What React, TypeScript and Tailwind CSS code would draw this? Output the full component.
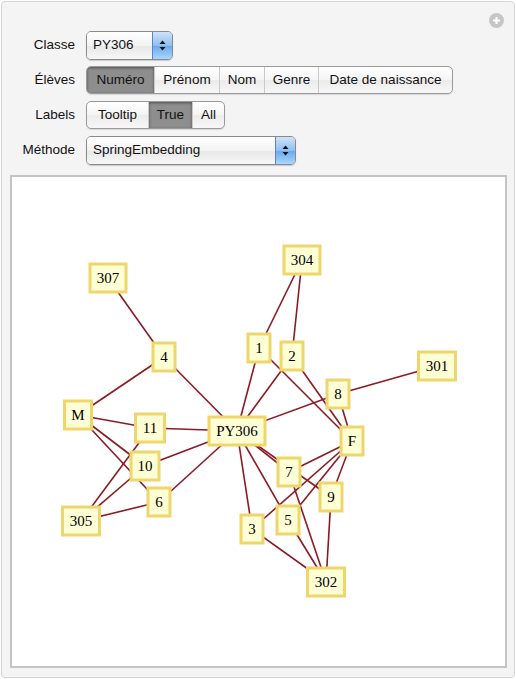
import React from "react";

type Node = { id: string; x: number; y: number; w: number };

// centres in page coordinates; the svg viewBox is offset to match
const nodes: Node[] = [
  { id: "307", x: 108, y: 278, w: 39 },
  { id: "304", x: 302, y: 260, w: 39 },
  { id: "4", x: 164, y: 357, w: 25 },
  { id: "1", x: 259, y: 348, w: 25 },
  { id: "2", x: 292, y: 356, w: 25 },
  { id: "301", x: 437, y: 366, w: 40 },
  { id: "8", x: 338, y: 394, w: 25 },
  { id: "M", x: 78, y: 415, w: 30 },
  { id: "11", x: 150, y: 428, w: 32 },
  { id: "PY306", x: 237, y: 431, w: 59 },
  { id: "10", x: 145, y: 466, w: 31 },
  { id: "6", x: 159, y: 502, w: 25 },
  { id: "305", x: 81, y: 521, w: 40 },
  { id: "3", x: 252, y: 529, w: 25 },
  { id: "F", x: 352, y: 441, w: 25 },
  { id: "7", x: 289, y: 472, w: 25 },
  { id: "9", x: 331, y: 497, w: 25 },
  { id: "5", x: 288, y: 520, w: 25 },
  { id: "302", x: 326, y: 582, w: 40 },
];

const edges: [string, string][] = [
  ["307", "4"],
  ["4", "M"],
  ["4", "PY306"],
  ["304", "1"],
  ["304", "2"],
  ["1", "PY306"],
  ["2", "PY306"],
  ["1", "F"],
  ["2", "F"],
  ["8", "F"],
  ["PY306", "8"],
  ["8", "301"],
  ["M", "11"],
  ["M", "10"],
  ["M", "6"],
  ["11", "PY306"],
  ["11", "305"],
  ["10", "305"],
  ["10", "PY306"],
  ["6", "PY306"],
  ["6", "305"],
  ["PY306", "3"],
  ["PY306", "5"],
  ["PY306", "7"],
  ["PY306", "9"],
  ["F", "7"],
  ["F", "3"],
  ["F", "5"],
  ["F", "9"],
  ["7", "302"],
  ["5", "302"],
  ["9", "302"],
  ["3", "302"],
];

const byId = Object.fromEntries(nodes.map((n) => [n.id, n]));

function Arrows() {
  return (
    <svg width="7" height="11" viewBox="0 0 7 11">
      <path d="M3.5 0.5 L6.5 4 L0.5 4 Z" fill="#111" />
      <path d="M3.5 10.5 L6.5 7 L0.5 7 Z" fill="#111" />
    </svg>
  );
}

function Popup({ value, width }: { value: string; width: string }) {
  return (
    <div
      className={`${width} h-[29px] flex rounded-[5px] border border-[#8a8a8a] shadow-[0_1px_1px_rgba(0,0,0,0.18)] overflow-hidden`}
    >
      <div className="flex-1 flex items-center pl-[6px] bg-[linear-gradient(#ffffff,#f3f3f3_50%,#e8e8e8_51%,#f6f6f6)] text-[#111]">
        {value}
      </div>
      <div className="w-[20px] flex items-center justify-center border-l border-[#5a85c0] bg-[linear-gradient(#cfe3f8,#8fc0f0_50%,#6aa8ec_51%,#a9d6fb)]">
        <Arrows />
      </div>
    </div>
  );
}

function Segmented({
  items,
  selected,
}: {
  items: { label: string; w: string }[];
  selected: string;
}) {
  return (
    <div className="flex h-[28px] rounded-[5px] border border-[#9a9a9a] overflow-hidden shadow-[0_1px_1px_rgba(0,0,0,0.12)] bg-[linear-gradient(#ffffff,#f4f4f4_50%,#ebebeb_51%,#f7f7f7)]">
      {items.map((it, i) => (
        <div
          key={it.label}
          className={`${it.w} flex items-center justify-center text-[#111] ${
            i > 0 ? "border-l border-[#c9c9c9]" : ""
          } ${
            it.label === selected
              ? "bg-[#8e8e8e] shadow-[inset_0_1px_3px_rgba(0,0,0,0.45)] border-[#7a7a7a]"
              : ""
          }`}
        >
          {it.label}
        </div>
      ))}
    </div>
  );
}

function Row({ label, children }: { label: string; children: React.ReactNode }) {
  return (
    <div className="flex items-center h-[28px]">
      <div className="w-[71px] text-right text-[#111]">{label}</div>
      <div className="ml-[11px]">{children}</div>
    </div>
  );
}

export default function App() {
  return (
    <div className="w-[516px] h-[679px] bg-white p-px font-['Liberation_Sans',Arial,sans-serif] text-[13.5px]">
      <div className="relative h-[677px] rounded-[4px] border border-[#d6d6d6] bg-[#f4f4f4] pt-[29px] pl-[8px] pr-[7px]">
        <div className="absolute right-[10px] top-[11px] w-[15px] h-[15px] rounded-full bg-[#c6c6c6] flex items-center justify-center">
          <svg width="9" height="9" viewBox="0 0 9 9">
            <path d="M4.5 1 V8 M1 4.5 H8" stroke="#fff" strokeWidth="2.2" />
          </svg>
        </div>

        <div className="-ml-[6px] flex flex-col gap-[7px]">
          <Row label="Classe">
            <Popup value="PY306" width="w-[87px]" />
          </Row>
          <Row label="Élèves">
            <Segmented
              selected="Numéro"
              items={[
                { label: "Numéro", w: "w-[67px]" },
                { label: "Prénom", w: "w-[65px]" },
                { label: "Nom", w: "w-[45px]" },
                { label: "Genre", w: "w-[54px]" },
                { label: "Date de naissance", w: "w-[134px]" },
              ]}
            />
          </Row>
          <Row label="Labels">
            <Segmented
              selected="True"
              items={[
                { label: "Tooltip", w: "w-[61px]" },
                { label: "True", w: "w-[44px]" },
                { label: "All", w: "w-[32px]" },
              ]}
            />
          </Row>
          <Row label="Méthode">
            <Popup value="SpringEmbedding" width="w-[210px]" />
          </Row>
        </div>

        <div className="mt-[11px] h-[493px] border-2 border-[#c4c4c4] bg-white">
          <svg width="492" height="489" viewBox="12 177 492 489" className="block">
            {edges.map(([a, b]) => (
              <line
                key={a + "-" + b}
                x1={byId[a].x}
                y1={byId[a].y}
                x2={byId[b].x}
                y2={byId[b].y}
                stroke="#8b1a22"
                strokeWidth="1.6"
              />
            ))}
            {nodes.map((n) => (
              <g key={n.id}>
                <rect
                  x={n.x - n.w / 2 + 1.5}
                  y={n.y - 15.5 + 1.5}
                  width={n.w - 3}
                  height={28}
                  fill="#ffffd6"
                  stroke="#eed66c"
                  strokeWidth="3"
                />
                <text
                  x={n.x}
                  y={n.y + 5}
                  textAnchor="middle"
                  fontFamily="'Liberation Serif', 'Times New Roman', serif"
                  fontSize="15"
                  fill="#000"
                >
                  {n.id}
                </text>
              </g>
            ))}
          </svg>
        </div>
      </div>
    </div>
  );
}
